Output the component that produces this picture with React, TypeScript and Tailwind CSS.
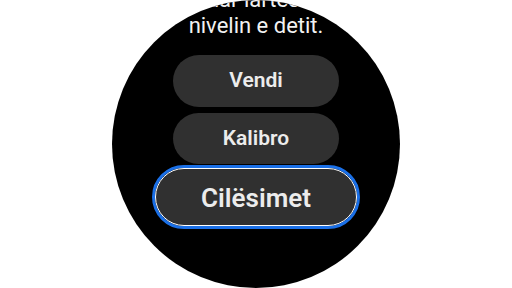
export default function App() {
  return (
    <main className="flex h-[288px] w-[512px] justify-center bg-white font-['Roboto',sans-serif]">
      <div className="flex h-[288px] w-[288px] flex-col items-center overflow-hidden rounded-full bg-black">
        <p className="-mt-[13px] whitespace-nowrap text-center text-[22px] leading-[26px] text-[#f2f2f2]">
          ndryshuar lartësinë mbi
          <br />
          nivelin e detit.
        </p>

        <div className="mt-[16px] flex flex-col items-center">
          <button className="flex h-[52px] w-[166px] items-center justify-center rounded-full bg-[#303030] text-[21px] font-semibold text-[#ececec]">
            Vendi
          </button>
          <button className="mt-[6px] flex h-[51px] w-[166px] items-center justify-center rounded-full bg-[#303030] text-[21px] font-semibold text-[#ececec]">
            Kalibro
          </button>
          <div className="mt-[1px] rounded-full border-[3px] border-[#1a6fe6]">
            <button className="flex h-[58px] w-[202px] items-center justify-center rounded-full border border-white bg-[#303030] pt-[2px] text-[26px] font-semibold text-[#ececec]">
              Cilësimet
            </button>
          </div>
        </div>
      </div>
    </main>
  );
}
